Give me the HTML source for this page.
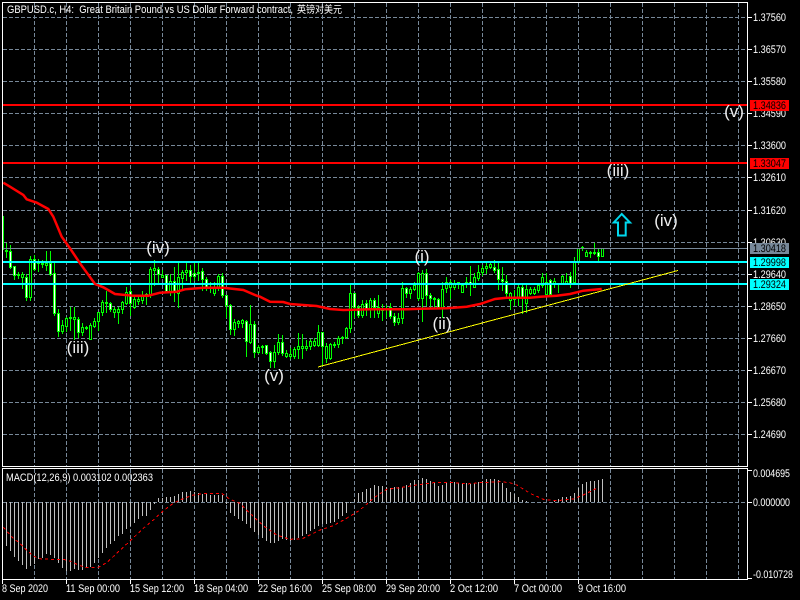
<!DOCTYPE html>
<html><head><meta charset="utf-8"><style>
html,body{margin:0;padding:0;background:#000;width:800px;height:600px;overflow:hidden}
svg{display:block;position:absolute;left:0;top:0}
text{font-family:"Liberation Sans","Noto Sans CJK SC",sans-serif;font-size:11px;fill:#fff}
.w{font-size:17px;fill:#eee;text-anchor:middle}
.t{fill:#000}
</style></head><body>
<svg id="s" width="800" height="600" viewBox="0 0 800 600" xmlns="http://www.w3.org/2000/svg">
<rect width="800" height="600" fill="#000"/>
<g id="grid" shape-rendering="crispEdges"></g>
<g id="macd" shape-rendering="crispEdges"></g>
<g id="candles" shape-rendering="crispEdges"></g>
<g shape-rendering="crispEdges">
<rect x="3" y="248" width="744" height="1" fill="#778899"/>
<rect x="3" y="261" width="744" height="2" fill="#00ffff"/>
<rect x="3" y="283" width="744" height="2" fill="#00ffff"/>
<rect x="3" y="104" width="744" height="2" fill="#ff0000"/>
<rect x="3" y="162" width="744" height="2" fill="#ff0000"/>
</g>
<polyline id="ma" fill="none" stroke="#ff0000" stroke-width="2.5"/>
<polyline id="sig" fill="none" stroke="#ff0000" stroke-width="1" stroke-dasharray="3 3" shape-rendering="crispEdges"/>
<line x1="318" y1="367" x2="678" y2="270.5" stroke="#ffff00" stroke-width="1" shape-rendering="crispEdges"/>
<polygon points="621.7,214 613.8,222.5 618,222.5 618,235.5 625.7,235.5 625.7,222.5 630,222.5" fill="#000" stroke="#00d8ee" stroke-width="2"/>
<g shape-rendering="crispEdges" fill="#fff" id="frame">
<rect x="2" y="2" width="746" height="1"/>
<rect x="2" y="2" width="1" height="465"/>
<rect x="747" y="2" width="1" height="465"/>
<rect x="2" y="466" width="746" height="1"/>
<rect x="2" y="468" width="746" height="1"/>
<rect x="2" y="468" width="1" height="112"/>
<rect x="747" y="468" width="1" height="112"/>
<rect x="2" y="579" width="746" height="1"/>
</g>
<text x="7" y="13" textLength="286" lengthAdjust="spacingAndGlyphs">GBPUSD.c, H4:&#160;&#160;Great Britain Pound vs US Dollar Forward contract,</text>
<text x="297" y="13" style="font-size:10px" textLength="45" lengthAdjust="spacingAndGlyphs">英镑对美元</text>
<text x="6" y="481" textLength="147" lengthAdjust="spacingAndGlyphs">MACD(12,26,9) 0.003102 0.002363</text>
<text class="w" x="78" y="353">(iii)</text>
<text class="w" x="158" y="253">(iv)</text>
<text class="w" x="274" y="381">(v)</text>
<text class="w" x="422" y="262">(i)</text>
<text class="w" x="442" y="329">(ii)</text>
<text class="w" x="734" y="117">(v)</text>
<text class="w" x="618" y="176">(iii)</text>
<text class="w" x="666" y="226">(iv)</text>
<g text-rendering="geometricPrecision">
<text x="753" y="21" textLength="33" lengthAdjust="spacingAndGlyphs">1.37560</text>
<text x="753" y="53" textLength="33" lengthAdjust="spacingAndGlyphs">1.36570</text>
<text x="753" y="85" textLength="33" lengthAdjust="spacingAndGlyphs">1.35580</text>
<text x="753" y="117" textLength="33" lengthAdjust="spacingAndGlyphs">1.34590</text>
<text x="753" y="149" textLength="33" lengthAdjust="spacingAndGlyphs">1.33600</text>
<text x="753" y="181" textLength="33" lengthAdjust="spacingAndGlyphs">1.32610</text>
<text x="753" y="214" textLength="33" lengthAdjust="spacingAndGlyphs">1.31620</text>
<text x="753" y="246" textLength="33" lengthAdjust="spacingAndGlyphs">1.30630</text>
<text x="753" y="278" textLength="33" lengthAdjust="spacingAndGlyphs">1.29640</text>
<text x="753" y="310" textLength="33" lengthAdjust="spacingAndGlyphs">1.28650</text>
<text x="753" y="342" textLength="33" lengthAdjust="spacingAndGlyphs">1.27660</text>
<text x="753" y="374" textLength="33" lengthAdjust="spacingAndGlyphs">1.26670</text>
<text x="753" y="406" textLength="33" lengthAdjust="spacingAndGlyphs">1.25680</text>
<text x="753" y="438" textLength="33" lengthAdjust="spacingAndGlyphs">1.24690</text>
<g shape-rendering="crispEdges">
<rect x="750" y="100" width="39" height="11" fill="#ff0000"/>
<rect x="750" y="158" width="39" height="11" fill="#ff0000"/>
<rect x="750" y="243" width="39" height="11" fill="#778899"/>
<rect x="750" y="257" width="39" height="11" fill="#00ffff"/>
<rect x="750" y="279" width="39" height="11" fill="#00ffff"/>
</g>
<text class="t" x="753" y="109" textLength="33" lengthAdjust="spacingAndGlyphs">1.34836</text>
<text class="t" x="753" y="167" textLength="33" lengthAdjust="spacingAndGlyphs">1.33047</text>
<text class="t" x="753" y="252" textLength="33" lengthAdjust="spacingAndGlyphs">1.30418</text>
<text class="t" x="753" y="266" textLength="33" lengthAdjust="spacingAndGlyphs">1.29998</text>
<text class="t" x="753" y="288" textLength="33" lengthAdjust="spacingAndGlyphs">1.29324</text>
<text x="753" y="477" textLength="37" lengthAdjust="spacingAndGlyphs">0.004695</text>
<text x="753" y="506" textLength="37" lengthAdjust="spacingAndGlyphs">0.000000</text>
<text x="753" y="578" textLength="40" lengthAdjust="spacingAndGlyphs">-0.010728</text>
<text x="2" y="592" textLength="46" lengthAdjust="spacingAndGlyphs">8 Sep 2020</text>
<text x="66" y="592" textLength="54" lengthAdjust="spacingAndGlyphs">11 Sep 00:00</text>
<text x="130" y="592" textLength="54" lengthAdjust="spacingAndGlyphs">15 Sep 12:00</text>
<text x="194" y="592" textLength="54" lengthAdjust="spacingAndGlyphs">18 Sep 04:00</text>
<text x="258" y="592" textLength="54" lengthAdjust="spacingAndGlyphs">22 Sep 16:00</text>
<text x="322" y="592" textLength="54" lengthAdjust="spacingAndGlyphs">25 Sep 08:00</text>
<text x="386" y="592" textLength="54" lengthAdjust="spacingAndGlyphs">29 Sep 20:00</text>
<text x="450" y="592" textLength="48" lengthAdjust="spacingAndGlyphs">2 Oct 12:00</text>
<text x="514" y="592" textLength="48" lengthAdjust="spacingAndGlyphs">7 Oct 00:00</text>
<text x="578" y="592" textLength="48" lengthAdjust="spacingAndGlyphs">9 Oct 16:00</text>
</g>
</svg>
<script>
(function(){
var NS="http://www.w3.org/2000/svg";
function R(g,x,y,w,h,f){var r=document.createElementNS(NS,"rect");r.setAttribute("x",x);r.setAttribute("y",y);r.setAttribute("width",w);r.setAttribute("height",h);r.setAttribute("fill",f);g.appendChild(r);}
var G=document.getElementById("grid"),GC="#778899";
function H(y,x1,x2){for(var x=x1;x<x2;x+=6)R(G,x,y,Math.min(4,x2-x),1,GC);}
function V(x,y1,y2){for(var y=y1;y<y2;y+=6)R(G,x,y,1,Math.min(4,y2-y),GC);}
[17,49,81,113,145,177,210,242,274,306,338,370,402,434].forEach(function(y){H(y,3,747);R(G,748,y,4,1,"#fff");});
H(502,3,747);
[470,502,578].forEach(function(y){R(G,748,y,4,1,"#fff");});
for(var x=34;x<747;x+=32){V(x,3,466);V(x,469,579);}
for(var x2=2;x2<=578;x2+=64){R(G,x2,580,1,4,"#fff");}

/* candles */
var C=document.getElementById("candles");
function drawSeg(base,list){list.forEach(function(d){
 var x=d[0],hi=Math.round(base+d[1]/3),lo=Math.round(base+d[2]/3),t=Math.round(base+d[3]/3),b=Math.round(base+d[4]/3);
 if(b<=t)b=t+1;
 R(C,x,hi,1,lo-hi+1,"#00ff00");
 R(C,x-1,t,3,b-t+1,"#00ff00");
 if(b-t>=2)R(C,x,t+1,1,b-t-1,d[5]?"#fff":"#000");
 else if(d[5])R(C,x,t,1,1,"#fff");
});}
R(C,3,216,1,34,"#00ff00");
drawSeg(180,[
[6,190,230,210,214,0],[10,195,265,212,262,1],[14,258,297,258,285,1],[18,275,295,282,286,0],[22,275,325,283,292,0],
[26,283,360,290,350,1],[30,228,360,238,350,0],[34,225,270,238,268,1],[38,238,272,245,250,0],[42,240,262,248,252,0],
[46,213,270,248,255,0],[50,213,285,250,283,1],[54,250,405,280,398,1],[58,388,468,398,452,1],[62,420,458,436,452,0],
[66,412,452,415,437,0],[70,380,450,410,415,0],[74,380,478,410,418,0],[78,410,470,418,455,1],[82,430,465,442,455,0],
[86,438,448,441,445,0],[90,430,476,435,476,0],[94,415,440,422,437,0],[98,395,450,397,422,0],[102,360,405,367,397,0],
[106,333,395,366,370,0],[110,365,392,370,388,1],[114,380,412,388,395,0],[118,380,430,388,395,0],[122,362,398,367,388,0],
[126,320,372,335,370,0],[130,320,405,332,370,1],[134,350,385,358,382,0],[138,350,372,358,362,0],[142,332,370,345,360,0],
[146,338,372,343,348,0],[150,262,350,267,343,0],[154,240,315,265,270,0],[158,262,310,267,283,1],[162,270,290,285,290,0],
[166,285,335,285,333,1],[170,283,345,303,333,0],[174,262,362,303,333,1],[178,250,380,292,340,0],[182,270,330,275,295,0],
[186,250,300,270,275,0],[190,255,310,270,287,1],[194,250,300,278,287,1],[198,250,300,275,280,0],[202,265,330,273,298,1],
[206,290,330,298,320,1],[210,305,335,320,325,0],[214,305,345,320,340,0],[218,282,330,288,320,0],[222,280,350,288,346,1],
[226,345,410,346,375,1],[230,372,462,375,448,1],[234,418,465,427,448,0],[238,420,440,422,428,0],[242,418,440,420,428,0],
[246,420,528,422,484,1],[250,375,488,432,486,0],[254,422,530,432,515,1],[258,495,518,500,515,0]
]);
drawSeg(230,[
[262,345,370,347,350,0],[266,345,372,345,368,1],[270,362,412,367,392,1],[274,345,412,365,392,0],[278,312,372,337,365,0],
[282,315,375,337,370,1],[286,360,380,370,378,0],[290,355,385,373,377,0],[294,350,385,358,377,0],[298,310,385,347,358,0],
[302,312,385,347,354,0],[306,330,360,347,353,0],[310,328,358,333,347,0],[314,325,347,333,345,0],[318,285,348,307,345,0],
[322,305,405,307,348,1],[326,340,395,348,385,0],[330,340,388,343,385,0],[334,335,350,342,346,0],[338,318,350,323,343,0],
[342,318,340,320,325,0],[346,292,325,295,320,0],[350,165,305,190,295,0],[354,188,260,190,230,1],[358,225,262,230,256,1],
[362,210,262,222,256,0],[366,210,255,218,237,1],[370,205,260,210,235,0],[374,205,262,210,232,1],[378,195,262,230,248,0],
[382,222,270,235,240,0],[386,225,260,233,238,0],[390,220,265,230,258,1],[394,250,285,257,275,1],[398,250,282,265,275,0],
[402,155,280,175,265,0],[406,170,200,175,190,1],[410,170,205,178,190,0],[414,155,180,165,178,0],[418,125,210,130,205,0],
[422,120,272,130,205,0],[426,118,225,130,195,1],[430,190,230,195,205,1],[434,200,235,203,208,0],[438,205,235,208,232,1],
[442,155,260,178,232,0],[446,142,185,155,175,0],[450,150,205,155,170,0],[454,150,178,160,170,0],[458,155,175,156,160,0],
[462,160,187,165,185,0],[466,142,170,156,160,0],[470,107,195,155,160,1],[474,130,170,140,170,0],[478,105,150,125,145,0],
[482,105,135,115,125,0],[486,100,130,107,115,0],[490,100,115,102,110,0],[494,90,125,110,120,1],[498,100,178,118,146,1],
[502,112,180,146,152,1],[506,135,200,152,188,1],[510,185,238,188,210,0],[514,180,225,203,207,0],[518,165,225,170,205,0],
[522,165,250,170,205,1],[526,165,245,178,218,0]
]);
drawSeg(90,[
[530,592,612,598,608,0],[534,590,612,598,608,0],[538,580,605,585,600,0],[542,550,590,560,585,0],[546,548,612,575,612,0],
[550,568,615,570,612,1],[554,565,590,572,578,0],[558,578,605,578,582,0],[562,555,580,558,578,0],[566,548,578,572,578,0],
[570,545,592,558,578,1],[574,500,578,515,575,0],[578,473,518,475,515,0],[582,468,480,470,475,0],[586,480,498,485,497,0],
[590,482,500,486,490,0],[594,458,492,486,490,0],[598,478,515,486,497,1],[602,473,497,473,497,0]
]);

/* MACD bars */
var M=document.getElementById("macd");
var m5=[255,270,288,300,312,325,315,310,295,290,278,282,290,305,322,330,330,325,328,328,322,318,305,290,275,262,250,240,225,218,205,195,185,175,165,165,148,128,115,113,112,110,108,103,97,95,93,97,100,102,103,105,105,105,105,130,155,165,175,180,188,200,212,222,232,240,246,245,240,235,238,240,238,232,225,218,210,205,195,190,190,185,183,175,165,155,125,118,100,95,88,85,75,77,78,80,85,82,82];
m5.forEach(function(v,i){var x=6+4*i,y=Math.round(460+v/3);if(y>=502)R(M,x,502,1,y-502+1,"#c0c0c0");else R(M,x,y,1,502-y,"#c0c0c0");});
var m6=[80,75,70,60,60,55,58,62,70,78,75,70,68,65,68,68,70,72,70,65,62,57,58,58,60,70,83,95,103,110,120,123,125,125,127,127,127,127,122,118,110,110,107,100,85,72,67,63,62,60,57];
m6.forEach(function(v,i){var x=402+4*i,y=Math.round(460+v/3);if(y<502)R(M,x,y,1,502-y,"#c0c0c0");});

/* MA */
var ma=[];
[[10,8],[30,20],[70,45],[80,58],[110,68],[145,87],[160,110],[185,170],[210,205],[240,250],[285,312],[310,322],[345,342],[400,347],[445,347],[480,338],[530,335],[555,328],[610,323],[670,323],[730,330],[770,347]].forEach(function(p){ma.push((p[0]/3).toFixed(1)+","+(180+p[1]/3).toFixed(1));});
[[0,200],[30,215],[70,216],[90,222],[130,225],[170,228],[210,237],[250,240],[330,238],[440,238],[480,236],[560,235],[620,230],[660,222],[705,207],[740,203],[810,203]].forEach(function(p){ma.push((260+p[0]/3).toFixed(1)+","+(230+p[1]/3).toFixed(1));});
[[120,620],[170,617],[210,612],[250,602],[305,597]].forEach(function(p){ma.push((500+p[0]/3).toFixed(1)+","+(90+p[1]/3).toFixed(1));});
document.getElementById("ma").setAttribute("points",ma.join(" "));

/* signal */
var sg=[];
[[10,202],[22,215],[40,235],[60,250],[80,270],[100,288],[118,296],[150,298],[190,298],[210,303],[235,315],[255,322],[295,322],[320,308],[350,280],[390,243],[430,205],[460,180],[490,152],[520,130],[545,118],[580,105],[620,100],[665,100],[690,118],[720,130],[750,160],[790,197],[830,225],[870,238],[905,237],[960,210],[1000,197],[1040,175],[1080,150],[1120,115],[1160,88]].forEach(function(p){sg.push((p[0]/3).toFixed(1)+","+(460+p[1]/3).toFixed(1));});
[[0,83],[50,75],[100,68],[150,67],[200,72],[240,68],[300,65],[330,68],[350,75],[390,100],[430,118],[470,122],[520,117],[550,105],[590,85]].forEach(function(p){sg.push((400+p[0]/3).toFixed(1)+","+(460+p[1]/3).toFixed(1));});
document.getElementById("sig").setAttribute("points",sg.join(" "));
})();
</script>
</body></html>
